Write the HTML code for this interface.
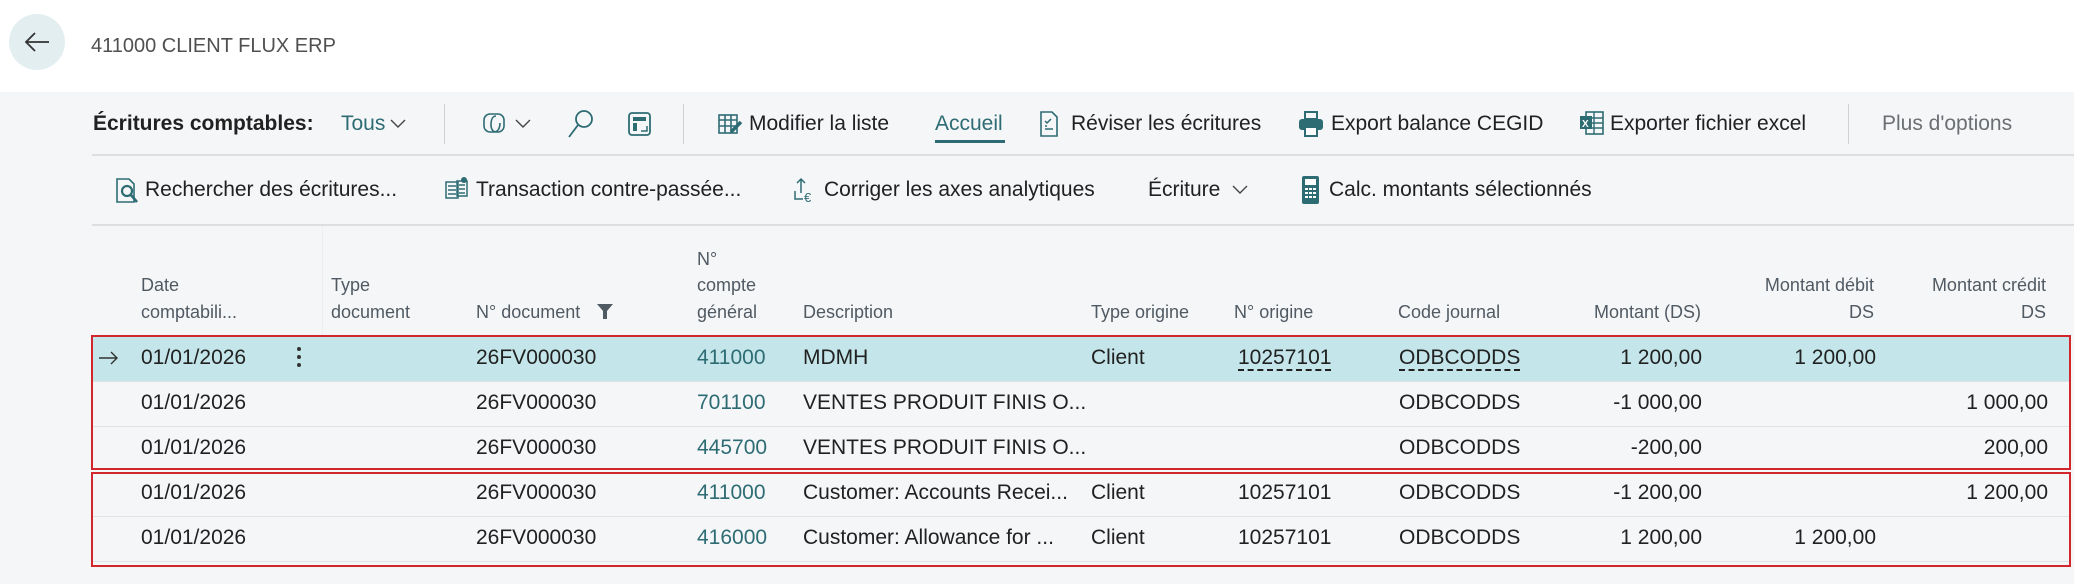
<!DOCTYPE html>
<html><head><meta charset="utf-8"><style>
*{margin:0;padding:0;box-sizing:border-box}
body{width:2074px;height:584px;background:#f5f6f8;font-family:"Liberation Sans",sans-serif;color:#212121;position:relative;overflow:hidden}
.a{position:absolute;white-space:nowrap}
.t{font-size:21px;line-height:28px}
.d{font-size:21px;line-height:30px}
.h{font-size:18px;line-height:24px;color:#505a63}
.r{text-align:right}
.lk{color:#2e6c74}
svg{position:absolute}
</style></head><body>
<div class="a" style="left:0;top:0;width:2074px;height:92px;background:#fff"></div>
<div class="a" style="left:9px;top:14px;width:56px;height:56px;border-radius:50%;background:#e3eef1"></div>
<svg style="left:23px;top:30px" width="28" height="24" viewBox="0 0 28 24"><path d="M26 12H3M12 3L3 12l9 9" fill="none" stroke="#333" stroke-width="1.8"/></svg>
<div class="a" style="left:91px;top:32px;font-size:20px;line-height:28px;color:#505050">411000 CLIENT FLUX ERP</div>

<div class="a t" style="left:93px;top:110px;font-weight:bold;color:#212121">Écritures comptables:</div>
<div class="a t" style="left:341px;top:110px;color:#2e6c74">Tous</div>
<svg style="left:389px;top:117px" width="18" height="12"><path d="M2 3l7 7 7-7" fill="none" stroke="#444" stroke-width="1.4"/></svg>
<div class="a" style="left:444px;top:104px;width:1px;height:40px;background:#d0d3d6"></div>
<svg style="left:482px;top:110px" width="28" height="28" viewBox="0 0 28 28"><path d="M8 4h8a6 6 0 0 1 6 6v6a6 6 0 0 1-6 6H8a6 6 0 0 1-6-6v-6a6 6 0 0 1 6-6zM14 6c-4 0-5 5-5 9s2 7 5 7M12 22c4 0 6-4 6-9" fill="none" stroke="#2e6c74" stroke-width="1.6"/></svg>
<svg style="left:514px;top:117px" width="18" height="12"><path d="M2 3l7 7 7-7" fill="none" stroke="#444" stroke-width="1.4"/></svg>
<svg style="left:566px;top:108px" width="30" height="32"><circle cx="18" cy="11" r="8" fill="none" stroke="#2e6c74" stroke-width="1.8"/><path d="M12 17L3 29" stroke="#2e6c74" stroke-width="1.8"/></svg>
<svg style="left:626px;top:110px" width="28" height="28"><rect x="3" y="3" width="21" height="22" rx="3" fill="none" stroke="#2e6c74" stroke-width="1.8"/><rect x="7" y="7" width="13" height="4" fill="#2e6c74"/><rect x="7" y="13" width="4" height="8" fill="#2e6c74"/><path d="M15 21h6v-5" fill="none" stroke="#2e6c74" stroke-width="1.5"/></svg>
<div class="a" style="left:683px;top:104px;width:1px;height:40px;background:#d0d3d6"></div>
<svg style="left:717px;top:112px" width="28" height="24"><rect x="2" y="3" width="18" height="18" fill="none" stroke="#2e6c74" stroke-width="1.6"/><path d="M2 8h18M8 3v18M14 3v18M2 14h18" stroke="#2e6c74" stroke-width="1.6"/><path d="M14 20l10-10" stroke="#2e6c74" stroke-width="3.5"/></svg>
<div class="a t" style="left:749px;top:110px">Modifier la liste</div>
<div class="a t" style="left:935px;top:110px;color:#2e6c74">Accueil</div>
<div class="a" style="left:935px;top:140px;width:70px;height:3px;background:#2e6c74"></div>
<svg style="left:1038px;top:110px" width="22" height="28"><path d="M3 2h11l5 5v19H3z" fill="none" stroke="#2e6c74" stroke-width="1.6"/><path d="M7 11l2 2 4-4M7 19h8M7 16h2" stroke="#2e6c74" stroke-width="1.5" fill="none"/></svg>
<div class="a t" style="left:1071px;top:110px">Réviser les écritures</div>
<svg style="left:1297px;top:110px" width="28" height="28"><rect x="8" y="2" width="12" height="7" fill="none" stroke="#2e6c74" stroke-width="2"/><rect x="2" y="9" width="24" height="11" rx="3" fill="#2e6c74"/><rect x="8" y="17" width="12" height="9" fill="#fff" stroke="#2e6c74" stroke-width="2"/></svg>
<div class="a t" style="left:1331px;top:110px">Export balance CEGID</div>
<svg style="left:1578px;top:110px" width="28" height="26"><rect x="8" y="2" width="17" height="22" fill="none" stroke="#2e6c74" stroke-width="1.6"/><path d="M8 8h17M8 13h17M8 18h17M16 2v22" stroke="#2e6c74" stroke-width="1.4"/><rect x="2" y="6" width="12" height="13" fill="#2e6c74"/><text x="4" y="17" font-size="10" fill="#fff" font-family="Liberation Sans" font-weight="bold">X</text></svg>
<div class="a t" style="left:1610px;top:110px">Exporter fichier excel</div>
<div class="a" style="left:1848px;top:104px;width:1px;height:40px;background:#d0d3d6"></div>
<div class="a t" style="left:1882px;top:110px;color:#6b6f73">Plus d'options</div>
<div class="a" style="left:92px;top:154px;width:1982px;height:2px;background:#dcdee1"></div>

<svg style="left:113px;top:176px" width="28" height="30"><path d="M4 3h12l5 5v18H4z" fill="none" stroke="#2e6c74" stroke-width="1.6"/><circle cx="14" cy="15" r="5" fill="none" stroke="#2e6c74" stroke-width="2.2"/><path d="M18 19l6 7" stroke="#2e6c74" stroke-width="2.6"/></svg>
<div class="a t" style="left:145px;top:176px">Rechercher des écritures...</div>
<svg style="left:443px;top:176px" width="28" height="28"><rect x="3" y="6" width="12" height="16" fill="none" stroke="#2e6c74" stroke-width="1.5"/><path d="M5 10h8M5 14h8M5 18h8" stroke="#2e6c74" stroke-width="1.4"/><rect x="14" y="5" width="10" height="15" fill="none" stroke="#2e6c74" stroke-width="1.5"/><path d="M16 9h6M16 13h6M16 17h6" stroke="#2e6c74" stroke-width="1.4"/><circle cx="21" cy="4" r="3" fill="#2e6c74"/></svg>
<div class="a t" style="left:476px;top:176px">Transaction contre-passée...</div>
<svg style="left:792px;top:176px" width="28" height="28"><path d="M9 3v14M5 7l4-4 4 4M3 15v8h8" fill="none" stroke="#2e6c74" stroke-width="1.5"/><text x="12" y="26" font-size="13" fill="#2e6c74" font-family="Liberation Sans">€</text></svg>
<div class="a t" style="left:824px;top:176px">Corriger les axes analytiques</div>
<div class="a t" style="left:1148px;top:176px">Écriture</div>
<svg style="left:1231px;top:183px" width="18" height="12"><path d="M2 3l7 7 7-7" fill="none" stroke="#444" stroke-width="1.4"/></svg>
<svg style="left:1300px;top:174px" width="22" height="32"><rect x="2" y="2" width="17" height="28" rx="2" fill="#2e6c74"/><rect x="5" y="5" width="11" height="6" fill="#fff"/><path d="M5 15h3M9 15h3M13 15h3M5 19h3M9 19h3M13 19h3M5 23h3M9 23h3M13 23h3" stroke="#fff" stroke-width="2"/></svg>
<div class="a t" style="left:1329px;top:176px">Calc. montants sélectionnés</div>
<div class="a" style="left:92px;top:224px;width:1982px;height:2px;background:#dcdee1"></div>

<div class="a" style="left:322px;top:226px;width:1px;height:108px;background:#eceef0"></div>
<div class="a h" style="left:141px;top:273px">Date</div>
<div class="a h" style="left:141px;top:300px">comptabili...</div>
<div class="a h" style="left:331px;top:273px">Type</div>
<div class="a h" style="left:331px;top:300px">document</div>
<div class="a h" style="left:476px;top:300px">N° document</div>
<svg style="left:596px;top:302px" width="18" height="18"><path d="M1 2h16l-6 7v8h-4v-8z" fill="#505a63"/></svg>
<div class="a h" style="left:697px;top:247px">N°</div>
<div class="a h" style="left:697px;top:273px">compte</div>
<div class="a h" style="left:697px;top:300px">général</div>
<div class="a h" style="left:803px;top:300px">Description</div>
<div class="a h" style="left:1091px;top:300px">Type origine</div>
<div class="a h" style="left:1234px;top:300px">N° origine</div>
<div class="a h" style="left:1398px;top:300px">Code journal</div>
<div class="a h r" style="left:1500px;width:201px;top:300px">Montant (DS)</div>
<div class="a h r" style="left:1700px;width:174px;top:273px">Montant débit</div>
<div class="a h r" style="left:1700px;width:174px;top:300px">DS</div>
<div class="a h r" style="left:1880px;width:166px;top:273px">Montant crédit</div>
<div class="a h r" style="left:1880px;width:166px;top:300px">DS</div>

<div class="a" style="left:92px;top:336px;width:1978px;height:45px;background:#c4e6ea"></div>
<div class="a" style="left:92px;top:381px;width:1978px;height:1px;background:#e0e2e4"></div>
<div class="a" style="left:92px;top:426px;width:1978px;height:1px;background:#e0e2e4"></div>
<div class="a" style="left:92px;top:516px;width:1978px;height:1px;background:#e0e2e4"></div>
<div class="a" style="left:92px;top:561px;width:1978px;height:1px;background:#e0e2e4"></div>
<div class="a" style="left:91px;top:335px;width:1980px;height:135px;border:2px solid #d1262b"></div>
<div class="a" style="left:91px;top:472px;width:1980px;height:95px;border:2px solid #d1262b"></div>

<svg style="left:98px;top:350px" width="22" height="16"><path d="M1 8h18M13 2l6 6-6 6" fill="none" stroke="#333" stroke-width="1.4"/></svg>
<div class="a" style="left:297px;top:347px;width:4px;height:4px;border-radius:50%;background:#333;box-shadow:0 8px 0 #333,0 16px 0 #333"></div>

<div class="a d" style="left:141px;top:343px">01/01/2026</div>
<div class="a d" style="left:476px;top:343px">26FV000030</div>
<div class="a d lk" style="left:697px;top:343px">411000</div>
<div class="a d" style="left:803px;top:343px">MDMH</div>
<div class="a d" style="left:1091px;top:343px">Client</div>
<div class="a d" style="left:1238px;top:343px;text-decoration:underline dashed;text-underline-offset:5px">10257101</div>
<div class="a d" style="left:1399px;top:343px;text-decoration:underline dashed;text-underline-offset:5px">ODBCODDS</div>
<div class="a d r" style="left:1500px;width:202px;top:343px">1 200,00</div>
<div class="a d r" style="left:1700px;width:176px;top:343px">1 200,00</div>

<div class="a d" style="left:141px;top:388px">01/01/2026</div>
<div class="a d" style="left:476px;top:388px">26FV000030</div>
<div class="a d lk" style="left:697px;top:388px">701100</div>
<div class="a d" style="left:803px;top:388px">VENTES PRODUIT FINIS O...</div>
<div class="a d" style="left:1399px;top:388px">ODBCODDS</div>
<div class="a d r" style="left:1500px;width:202px;top:388px">-1 000,00</div>
<div class="a d r" style="left:1880px;width:168px;top:388px">1 000,00</div>

<div class="a d" style="left:141px;top:433px">01/01/2026</div>
<div class="a d" style="left:476px;top:433px">26FV000030</div>
<div class="a d lk" style="left:697px;top:433px">445700</div>
<div class="a d" style="left:803px;top:433px">VENTES PRODUIT FINIS O...</div>
<div class="a d" style="left:1399px;top:433px">ODBCODDS</div>
<div class="a d r" style="left:1500px;width:202px;top:433px">-200,00</div>
<div class="a d r" style="left:1880px;width:168px;top:433px">200,00</div>

<div class="a d" style="left:141px;top:478px">01/01/2026</div>
<div class="a d" style="left:476px;top:478px">26FV000030</div>
<div class="a d lk" style="left:697px;top:478px">411000</div>
<div class="a d" style="left:803px;top:478px">Customer: Accounts Recei...</div>
<div class="a d" style="left:1091px;top:478px">Client</div>
<div class="a d" style="left:1238px;top:478px">10257101</div>
<div class="a d" style="left:1399px;top:478px">ODBCODDS</div>
<div class="a d r" style="left:1500px;width:202px;top:478px">-1 200,00</div>
<div class="a d r" style="left:1880px;width:168px;top:478px">1 200,00</div>

<div class="a d" style="left:141px;top:523px">01/01/2026</div>
<div class="a d" style="left:476px;top:523px">26FV000030</div>
<div class="a d lk" style="left:697px;top:523px">416000</div>
<div class="a d" style="left:803px;top:523px">Customer: Allowance for ...</div>
<div class="a d" style="left:1091px;top:523px">Client</div>
<div class="a d" style="left:1238px;top:523px">10257101</div>
<div class="a d" style="left:1399px;top:523px">ODBCODDS</div>
<div class="a d r" style="left:1500px;width:202px;top:523px">1 200,00</div>
<div class="a d r" style="left:1700px;width:176px;top:523px">1 200,00</div>
</body></html>
